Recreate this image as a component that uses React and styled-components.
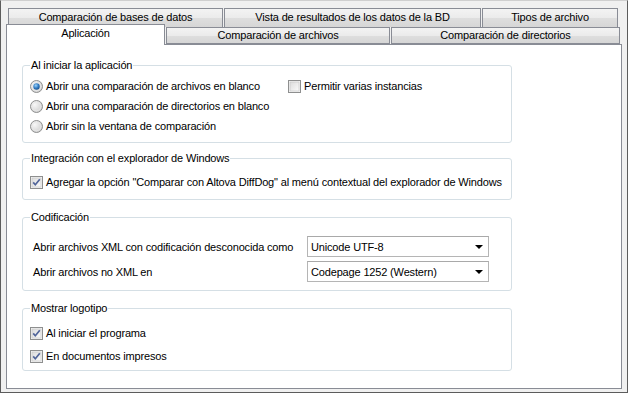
import React from 'react';
import styled, { createGlobalStyle } from 'styled-components';

const GlobalStyle = createGlobalStyle`
    body {
        margin: 0;
        background: #ffffff;
    }
`;

const CheckBox = ({ checked }) => (
    <svg width="13" height="13" viewBox="0 0 13 13">
        <defs>
            <linearGradient id="cbFill" x1="0" y1="0" x2="1" y2="1">
                <stop offset="0" stopColor="#dcdcdc" />
                <stop offset="1" stopColor="#fbfbfb" />
            </linearGradient>
        </defs>
        <rect x="0.5" y="0.5" width="12" height="12" fill="#f4f4f4" stroke="#8e8f8f" />
        <rect x="2" y="2" width="9" height="9" fill="url(#cbFill)" stroke="#c4c4c4" strokeWidth="0.6" />
        {checked && (
            <path d="M3.2 6.4 L5.3 8.8 L9.8 3.2" fill="none" stroke="#51659a" strokeWidth="1.7" />
        )}
    </svg>
);

const Radio = ({ checked }) => (
    <svg width="13" height="13" viewBox="0 0 13 13">
        <defs>
            <radialGradient id="rbOff" cx="0.35" cy="0.35" r="0.7">
                <stop offset="0" stopColor="#f8f8f8" />
                <stop offset="1" stopColor="#cfcfcf" />
            </radialGradient>
            <radialGradient id="rbDot" cx="0.4" cy="0.35" r="0.7">
                <stop offset="0" stopColor="#9bd3fb" />
                <stop offset="0.6" stopColor="#2e78c0" />
                <stop offset="1" stopColor="#1b4f86" />
            </radialGradient>
        </defs>
        <circle cx="6.5" cy="6.5" r="6" fill="url(#rbOff)" stroke="#8e8f8f" />
        <circle cx="6.5" cy="6.5" r="4.3" fill="none" stroke="#e8e8e8" strokeWidth="0.8" />
        {checked && <circle cx="6.5" cy="6.5" r="3.2" fill="url(#rbDot)" />}
    </svg>
);

const tabsTop = [
    { label: 'Comparación de bases de datos', w: 215 },
    { label: 'Vista de resultados de los datos de la BD', w: 257 },
    { label: 'Tipos de archivo', w: 136 },
];

const tabsBottom = [
    { label: 'Aplicación', w: 159, active: true },
    { label: 'Comparación de archivos', w: 224 },
    { label: 'Comparación de directorios', w: 229 },
];

const App = () => {
    return (
        <>
            <GlobalStyle />
            <Frame>
                <TopRow>
                    {tabsTop.map(t => (
                        <Tab key={t.label} w={t.w}>{t.label}</Tab>
                    ))}
                </TopRow>
                <BottomRow>
                    {tabsBottom.map(t => (
                        <Tab key={t.label} w={t.w} active={t.active}>{t.label}</Tab>
                    ))}
                </BottomRow>
                <Panel>
                    <Group>
                        <Legend>Al iniciar la aplicación</Legend>
                        <StartGrid>
                            <div>
                                <Option><Radio checked />Abrir una comparación de archivos en blanco</Option>
                                <Option><Radio />Abrir una comparación de directorios en blanco</Option>
                                <Option><Radio />Abrir sin la ventana de comparación</Option>
                            </div>
                            <div>
                                <Option><CheckBox />Permitir varias instancias</Option>
                            </div>
                        </StartGrid>
                    </Group>

                    <Group gapTop={9}>
                        <Legend>Integración con el explorador de Windows</Legend>
                        <Body top={7} bottom={7}>
                            <Option><CheckBox checked />Agregar la opción "Comparar con Altova DiffDog" al menú contextual del explorador de Windows</Option>
                        </Body>
                    </Group>

                    <Group gapTop={11}>
                        <Legend>Codificación</Legend>
                        <EncodingGrid>
                            <FieldLabel>Abrir archivos XML con codificación desconocida como</FieldLabel>
                            <Select>Unicode UTF-8<Arrow /></Select>
                            <FieldLabel>Abrir archivos no XML en</FieldLabel>
                            <Select>Codepage 1252 (Western)<Arrow /></Select>
                        </EncodingGrid>
                    </Group>

                    <Group gapTop={11}>
                        <Legend>Mostrar logotipo</Legend>
                        <Body top={8} bottom={4} rowGap={3}>
                            <Option><CheckBox checked />Al iniciar el programa</Option>
                            <Option><CheckBox checked />En documentos impresos</Option>
                        </Body>
                    </Group>
                </Panel>
            </Frame>
        </>
    );
}

const Frame = styled.div`
    width: 628px;
    height: 393px;
    box-sizing: border-box;
    background: #f0f0f0;
    border: 1px solid #5c5c5c;
    border-top-color: #cfcfcf;
    padding: 7px 5px 0 5px;
    font-family: Tahoma, "Liberation Sans", Arial, sans-serif;
    font-size: 11px;
    letter-spacing: -0.16px;
    color: #000;
`;

const TopRow = styled.div`
    display: flex;
    height: 19px;
    padding-left: 2px;
`;

const BottomRow = styled.div`
    display: flex;
    align-items: flex-end;
    height: 20px;
    margin-top: -3px;
    position: relative;
    z-index: 1;
`;

const Tab = styled.div`
    box-sizing: border-box;
    flex: none;
    width: ${props => props.w}px;
    height: ${props => props.active ? 21 : 17}px;
    margin-bottom: ${props => props.active ? -1 : 0}px;
    border: 1px solid #898c95;
    border-bottom: ${props => props.active ? 'none' : '1px solid #898c95'};
    background: ${props => props.active
        ? '#ffffff'
        : 'linear-gradient(to bottom, #f3f3f3 0%, #ebebeb 50%, #dedede 52%, #d6d6d6 100%)'};
    text-align: center;
    line-height: ${props => props.active ? 17 : 15}px;
    white-space: nowrap;
    ${TopRow} & {
        height: 19px;
        line-height: 16px;
        border-bottom: none;
        margin-left: 0;
    }
    & + & {
        margin-left: 1px;
    }
    ${BottomRow} & + & {
        margin-left: 0;
    }
`;

const Panel = styled.div`
    box-sizing: border-box;
    width: 616px;
    height: 345px;
    border: 1px solid #898c95;
    background: #ffffff;
    padding: 14px 0 0 15px;
`;

const Group = styled.fieldset`
    box-sizing: border-box;
    width: 490px;
    margin: ${props => props.gapTop || 0}px 0 0 0;
    padding: 0 7px;
    min-width: 0;
    border: 1px solid #d5dfe5;
    border-radius: 3px;
`;

const Legend = styled.legend`
    padding: 0 1px;
    line-height: 13px;
    font-size: 11px;
`;

const Body = styled.div`
    display: flex;
    flex-direction: column;
    gap: ${props => props.rowGap || 0}px;
    padding: ${props => props.top}px 0 ${props => props.bottom}px 0;
`;

const StartGrid = styled.div`
    display: grid;
    grid-template-columns: 258px 1fr;
    padding: 4px 0 6px 0;
`;

const Option = styled.label`
    display: flex;
    align-items: center;
    gap: 3px;
    height: 20px;
    white-space: nowrap;
    svg {
        flex: none;
    }
`;

const EncodingGrid = styled.div`
    display: grid;
    grid-template-columns: 274px 182px;
    grid-auto-rows: 21px;
    row-gap: 4px;
    align-items: center;
    padding: 12px 0 8px 3px;
`;

const FieldLabel = styled.span`
    white-space: nowrap;
`;

const Select = styled.div`
    box-sizing: border-box;
    height: 21px;
    display: flex;
    align-items: center;
    justify-content: space-between;
    padding: 0 4px 0 3px;
    border: 1px solid #b5b5b5;
    border-top-color: #a9a9a9;
    background: #ffffff;
    white-space: nowrap;
`;

const Arrow = styled.span`
    width: 0;
    height: 0;
    border-left: 4px solid transparent;
    border-right: 4px solid transparent;
    border-top: 4px solid #000;
    margin-right: 1px;
`;

export default App;
